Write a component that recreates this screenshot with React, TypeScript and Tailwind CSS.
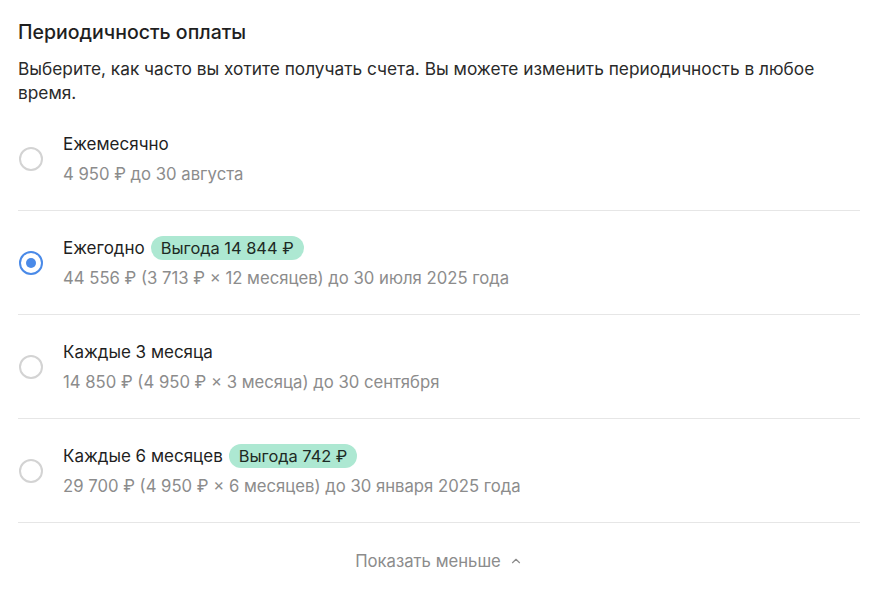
import { useState } from 'react';
import { ChevronUp } from 'lucide-react';

interface Plan {
  id: string;
  title: string;
  badge?: string;
  details: string;
}

const plans: Plan[] = [
  { id: 'month', title: 'Ежемесячно', details: '4 950 ₽ до 30 августа' },
  {
    id: 'year',
    title: 'Ежегодно',
    badge: 'Выгода 14 844 ₽',
    details: '44 556 ₽ (3 713 ₽ × 12 месяцев) до 30 июля 2025 года',
  },
  { id: 'q3', title: 'Каждые 3 месяца', details: '14 850 ₽ (4 950 ₽ × 3 месяца) до 30 сентября' },
  {
    id: 'q6',
    title: 'Каждые 6 месяцев',
    badge: 'Выгода 742 ₽',
    details: '29 700 ₽ (4 950 ₽ × 6 месяцев) до 30 января 2025 года',
  },
];

function Radio({ checked }: { checked: boolean }) {
  return (
    <span
      className={
        checked
          ? 'ml-px flex h-6 w-6 shrink-0 items-center justify-center rounded-full border-2 border-[#4a8ae8]'
          : 'ml-px flex h-6 w-6 shrink-0 items-center justify-center rounded-full border-2 border-[#d3d3d3]'
      }
    >
      {checked && <span className="h-[10px] w-[10px] rounded-full bg-[#4a8ae8]" />}
    </span>
  );
}

export default function App() {
  const [selected, setSelected] = useState('year');

  return (
    <div className="min-h-screen w-full bg-white pl-[18px] pr-5 pt-[18px] font-['Inter',sans-serif] text-[#1f1f1f]">
      <h2 className="text-[19.5px] font-medium leading-7">Периодичность оплаты</h2>
      <p className="mt-[11px] text-[17.3px] leading-6 text-[#2a2a2a]">
        Выберите, как часто вы хотите получать счета. Вы можете изменить периодичность в любое время.
      </p>

      <div className="mt-[2px]">
        {plans.map((plan) => (
          <label
            key={plan.id}
            onClick={() => setSelected(plan.id)}
            className="flex cursor-pointer items-center gap-5 border-b border-[#e6e6e6] pb-6 pt-[25px]"
          >
            <Radio checked={selected === plan.id} />
            <div className="flex flex-col gap-1.5">
              <div className="flex h-6 items-center gap-[6px] text-[17px] leading-6">
                <span>{plan.title}</span>
                {plan.badge && (
                  <span className="rounded-full bg-[#ade8d2] px-[10px] text-[16.4px] leading-6 text-[#1d2a24]">
                    {plan.badge}
                  </span>
                )}
              </div>
              <div className="text-[16.7px] leading-6 text-[#8c8c8c]">{plan.details}</div>
            </div>
          </label>
        ))}
      </div>

      <button className="mx-auto mt-[26px] flex items-center gap-2 text-[16.7px] leading-6 text-[#8c8c8c]">
        Показать меньше
        <ChevronUp size={14} strokeWidth={2} />
      </button>
    </div>
  );
}
